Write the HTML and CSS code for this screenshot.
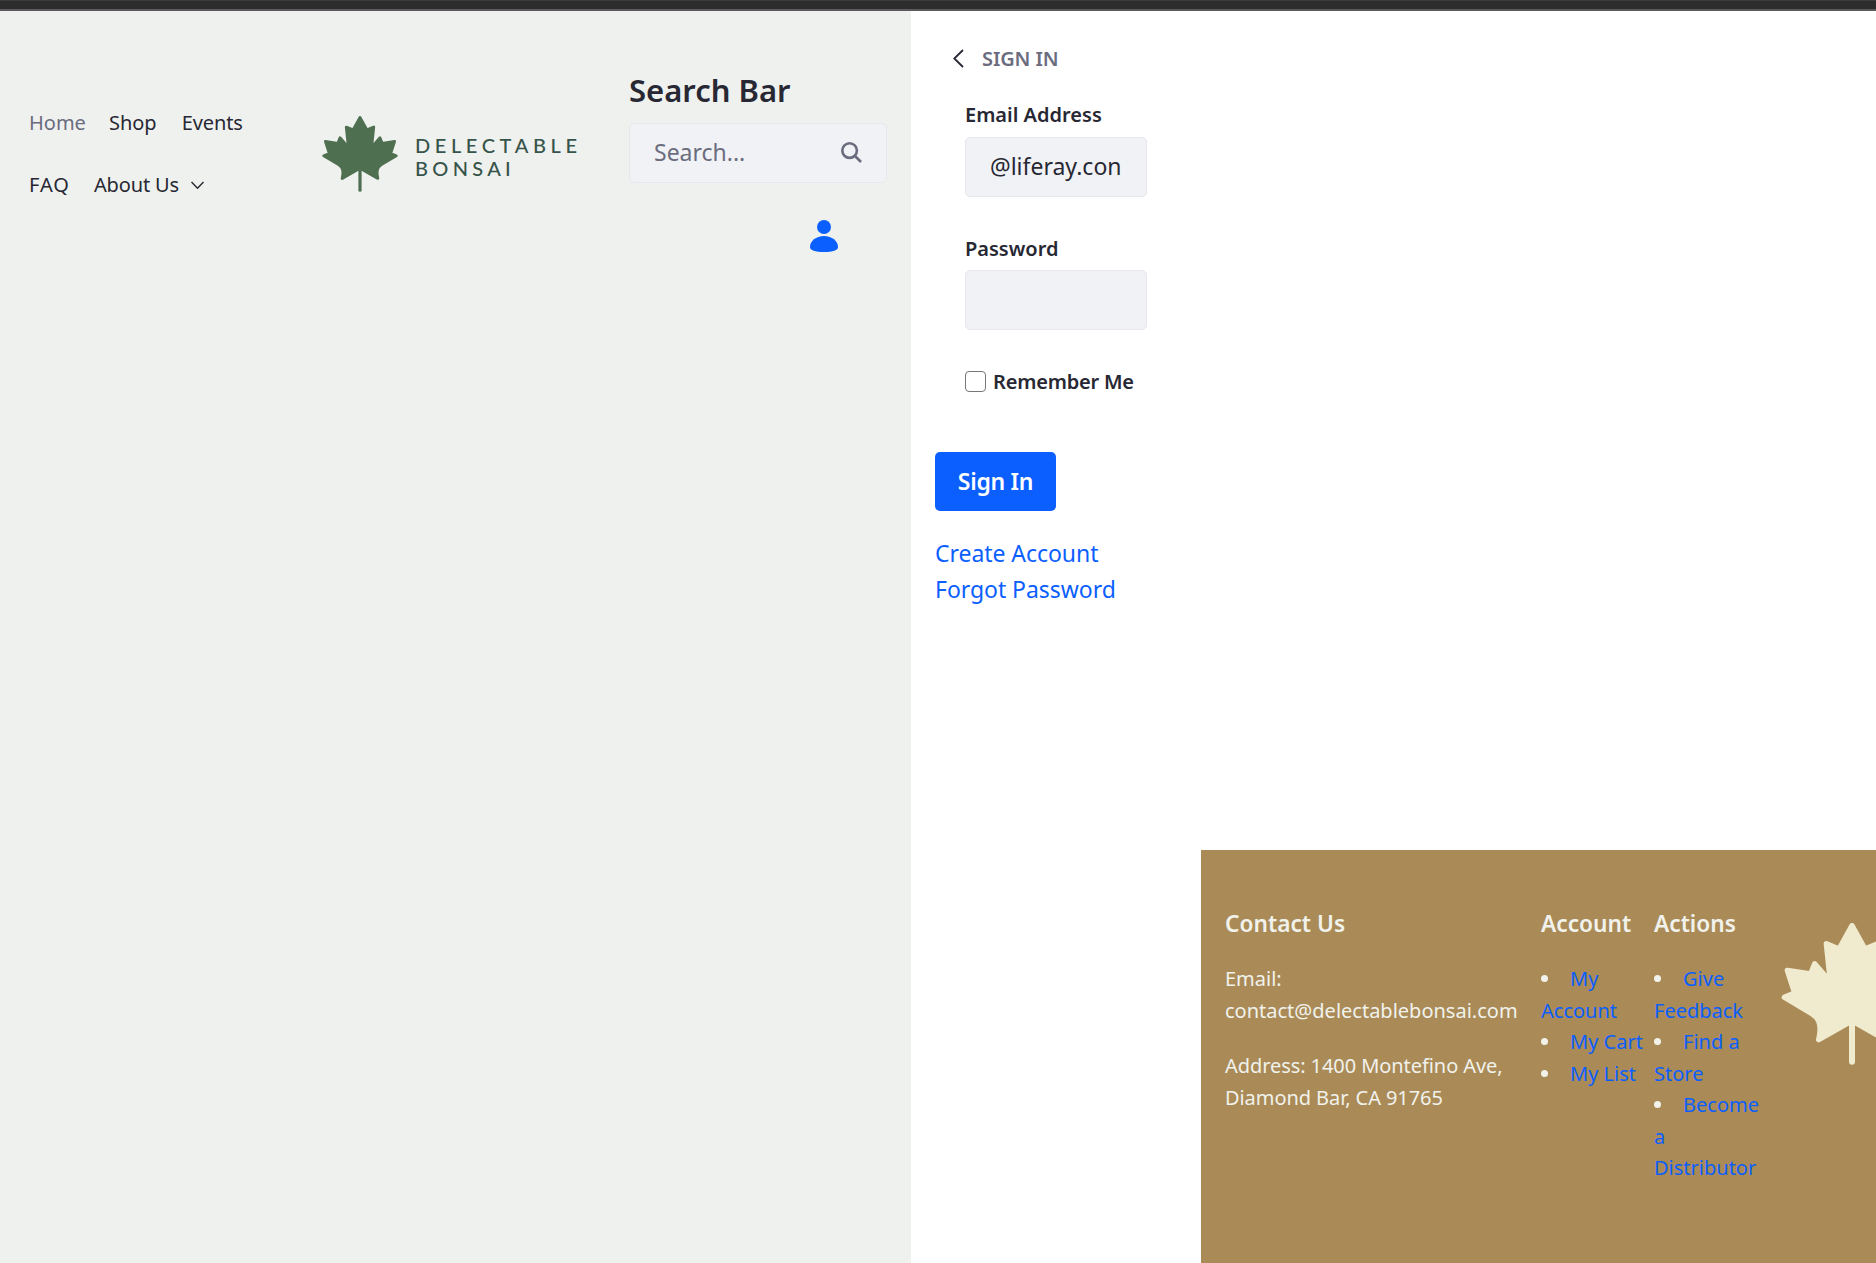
FILE: index.html
```html
<!DOCTYPE html>
<html lang="en">
<head>
<meta charset="utf-8">
<title>Delectable Bonsai</title>
<link rel="stylesheet" href="styles.css">
</head>
<body>
<svg class="defs" aria-hidden="true">
  <symbol id="leaf" viewBox="-212 0 424 426">
    <path fill="currentColor" stroke="currentColor" stroke-width="16" stroke-linejoin="round" d="M0 8L39 78L77 62L65 176L112 122L124 153L194 142L172 210L203 223L118 274Q86 292 100 350L10 299L-10 299L-100 350Q-86 292 -118 274L-203 223L-172 210L-194 142L-124 153L-112 122L-65 176L-77 62L-39 78Z"/>
    <path fill="none" stroke="currentColor" stroke-width="18" stroke-linecap="round" d="M0 290V416"/>
  </symbol>
</svg>
<div class="topbar"></div>
<div class="page">
  <header class="side">
    <nav class="nav">
      <div class="nav-row"><a class="current">Home</a><a class="shop">Shop</a><a class="events">Events</a></div>
      <div class="nav-row"><a class="faq">FAQ</a><a class="about">About Us</a><svg class="chev" viewBox="0 0 14 9"><path d="M1 1l6 6.3L13 1"/></svg></div>
    </nav>
    <div class="brand">
      <svg class="brand-leaf"><use href="#leaf"/></svg>
      <div class="brand-name"><span>DELECTABLE</span><span class="second">BONSAI</span></div>
    </div>
    <div class="search">
      <h2>Search Bar</h2>
      <div class="field search-field"><span>Search...</span>
        <svg class="glass" viewBox="0 0 21 21"><circle cx="8.6" cy="8.6" r="7.3"/><path d="M14 14l6 6"/></svg>
      </div>
      <svg class="user" viewBox="0 0 28 32"><circle cx="14" cy="7" r="7"/><path d="M14 16C6 16 0 21 0 27C0 30.500 5 32 14 32S28 30.500 28 27C28 21 22 16 14 16Z"/></svg>
    </div>
  </header>
  <main class="main">
    <section class="login">
      <div class="back"><svg viewBox="0 0 11 19"><path d="M10 1L1.300 9.500L10 18"/></svg><span>SIGN IN</span></div>
      <form class="form">
        <label>Email Address</label>
        <div class="field"><span>@liferay.con</span></div>
        <label class="pw">Password</label>
        <div class="field"></div>
        <div class="remember"><i class="box"></i><span>Remember Me</span></div>
      </form>
      <button class="btn" type="button">Sign In</button>
      <div class="links"><a>Create Account</a><a>Forgot Password</a></div>
    </section>
    <footer class="footer">
      <div class="col contact">
        <h3>Contact Us</h3>
        <p>Email:<br>contact@delectablebonsai.com</p>
        <p class="address">Address: 1400 Montefino Ave,<br>Diamond Bar, CA 91765</p>
      </div>
      <div class="col account">
        <h3>Account</h3>
        <ul><li><a>My<br>Account</a></li><li><a>My Cart</a></li><li><a>My List</a></li></ul>
      </div>
      <div class="col actions">
        <h3>Actions</h3>
        <ul><li><a>Give<br>Feedback</a></li><li><a>Find a<br>Store</a></li><li><a>Become<br>a<br>Distributor</a></li></ul>
      </div>
      <svg class="big-leaf"><use href="#leaf"/></svg>
    </footer>
  </main>
</div>
</body>
</html>
```
FILE: styles.css
```css
* { box-sizing: border-box; }
body {
  margin: 0;
  height: 1263px;
  overflow: hidden;
  background: #fff;
  color: #272833;
  font: 20px/31.5px "Noto Sans", sans-serif;
}
h2, h3, p, ul { margin: 0; padding: 0; }
.defs { display: none; }
.topbar { height: 11px; background: #2d2d2d; border-top: 1px solid #3b3b3b; border-bottom: 2px solid #5b595b; }
.page { display: flex; height: 1252px; }
.side { display: flex; width: 911px; background: #eff1ee; }
.nav { width: 322px; padding: 81px 0 0 29px; }
.nav-row { display: flex; align-items: center; height: 62px; gap: 24px; }
.current { color: #6b6c7e; }
.shop { margin-left: -1px; }
.events { margin-left: 1px; letter-spacing: -0.1px; }
.faq { letter-spacing: 1px; }
.about { letter-spacing: -0.15px; }
.chev { width: 15px; height: 9px; margin-left: -13px; fill: none; stroke: #272833; stroke-width: 1.4; }
.brand { display: flex; width: 307px; height: 76px; margin-top: 104px; }
.brand-leaf { width: 76px; height: 76px; margin-top: 0.5px; color: #4f6f51; }
.brand-name { display: flex; flex-direction: column; margin: 18.500px 0 0 17px; font: 500 20px/23px Lato, sans-serif; letter-spacing: 4.6px; color: #37544a; }
.second { letter-spacing: 4.3px; }
.search { width: 258px; padding-top: 58px; }
h2 { font-size: 31px; font-weight: 600; line-height: 42px; }
.field { display: flex; align-items: center; height: 60px; padding: 0 24px; background: #f1f2f5; border: 1px solid #e7e7ed; border-radius: 5px; font-size: 23px; white-space: nowrap; }
.search-field { margin-top: 12px; justify-content: space-between; color: #6b6c7e; }
.glass { width: 21px; height: 21px; margin-top: -1px; fill: none; stroke: #6b6c7e; stroke-width: 2.600; }
.user { display: block; width: 28px; height: 32px; margin: 37px 0 0 181px; fill: #0b5fff; }
.main { flex: 1; display: flex; min-width: 0; }
.login { width: 290px; padding: 31px 0 0 24px; }
.back { display: flex; align-items: center; height: 34px; padding-left: 18px; gap: 18px; color: #6b6c7e; font-weight: 600; letter-spacing: -0.1px; }
.back svg { width: 11px; height: 19px; margin-top: -2px; fill: none; stroke: #272833; stroke-width: 1.8; }
.form { width: 212px; padding-left: 30px; font-weight: 600; }
label { display: block; margin-top: 24px; height: 37px; line-height: 30px; }
label.pw { margin-top: 37px; height: 36px; }
.form .field { font-weight: 400; }
.remember { display: flex; align-items: center; gap: 7px; margin-top: 36px; margin-bottom: 1px; white-space: nowrap; letter-spacing: -0.2px; }
.box { width: 21px; height: 21px; border: 1px solid #767676; border-radius: 4px; }
.btn { display: block; width: 121px; height: 59px; margin-top: 54px; padding: 0 0 1px; border: 0; border-radius: 5px; background: #0b5fff; color: #fff; font: 600 23px "Noto Sans", sans-serif; letter-spacing: -0.3px; }
.links { display: flex; flex-direction: column; margin-top: 24px; font-size: 23px; line-height: 36px; letter-spacing: -0.05px; }
.links a, li a { color: #0b5fff; }
.footer { display: flex; flex: 1; min-width: 0; overflow: hidden; align-self: flex-end; height: 413px; padding: 58px 0 0 24px; background: #aa8b57; color: #f1f2ec; }
.col { flex: none; white-space: nowrap; }
.contact { width: 316px; }
.account { width: 113px; }
.actions { width: 127px; }
h3 { font-size: 22.700px; font-weight: 600; line-height: 32px; margin-bottom: 23px; }
.contact p { margin-bottom: 24px; }
.address { letter-spacing: -0.07px; }
ul { list-style: none; }
li::before { content: ""; display: inline-block; width: 7px; height: 7px; margin-right: 22px; border-radius: 50%; background: #f1f2ec; vertical-align: 4px; }
.big-leaf { flex: none; width: 142px; height: 142px; margin-top: 15px; color: #f0eacf; }
```
